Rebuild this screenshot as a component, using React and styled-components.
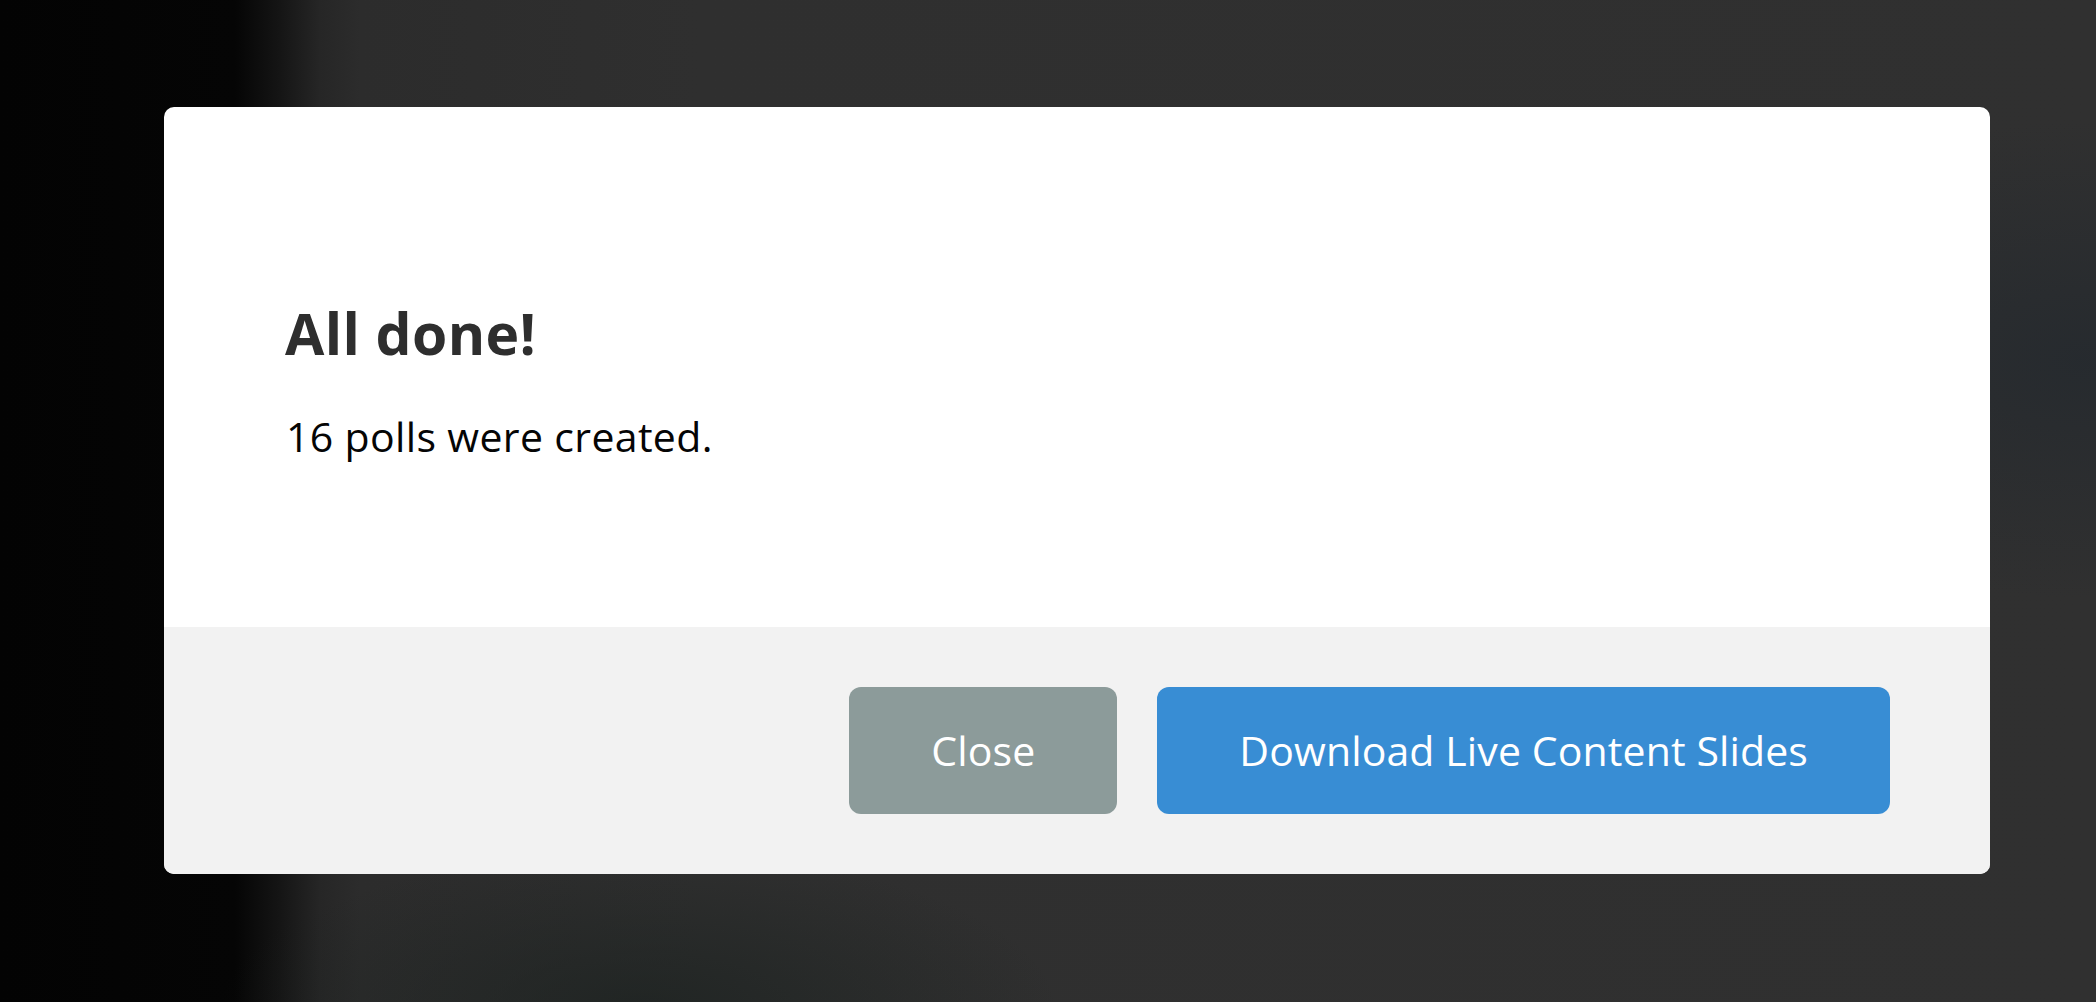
import React from "react";
import styled, { createGlobalStyle } from "styled-components";

const GlobalStyle = createGlobalStyle`
  html, body {
    margin: 0;
    padding: 0;
    width: 100%;
    height: 100%;
    overflow: hidden;
    background: #2f2f2f;
  }
  #root {
    height: 100%;
  }
  * {
    box-sizing: border-box;
  }
`;

const Backdrop = styled.div`
  width: 2096px;
  height: 1002px;
  padding: 107px 106px 0 164px;
  display: flex;
  align-items: flex-start;
  font-family: "Open Sans", "DejaVu Sans", sans-serif;
  background:
    radial-gradient(ellipse 420px 160px at 640px 1010px, rgba(28, 34, 32, 0.75), rgba(28, 34, 32, 0) 100%),
    radial-gradient(ellipse 360px 240px at 2080px 360px, rgba(34, 40, 46, 0.7), rgba(34, 40, 46, 0) 100%),
    linear-gradient(
      to right,
      #030303 0px,
      #050505 235px,
      #151515 280px,
      #262626 320px,
      #2c2c2c 360px,
      #2f2f2f 700px,
      #303030 100%
    );
`;

const Modal = styled.div`
  width: 1826px;
  border-radius: 10px;
  overflow: hidden;
  background: #ffffff;
  display: flex;
  flex-direction: column;
`;

const Body = styled.div`
  padding: 194px 121px 167px;
  display: flex;
  flex-direction: column;
`;

const Title = styled.h1`
  margin: 0;
  font-size: 57px;
  line-height: 64px;
  font-weight: 700;
  letter-spacing: 0.4px;
  color: #2e2e2e;
`;

const Message = styled.p`
  margin: 47px 0 0 1px;
  font-size: 41px;
  line-height: 48px;
  font-weight: 400;
  letter-spacing: 0.35px;
  color: #050505;
`;

const Footer = styled.div`
  background: #f2f2f2;
  padding: 60px 100px 60px 0;
  display: flex;
  justify-content: flex-end;
  gap: 40px;
`;

const Button = styled.button`
  height: 127px;
  padding: 0 82px;
  border: none;
  border-radius: 12px;
  background: ${(p) => (p.$primary ? "#388dd4" : "#8c9b9a")};
  color: #ffffff;
  font-family: "Open Sans", "DejaVu Sans", sans-serif;
  font-size: 41px;
  font-weight: 400;
  letter-spacing: 0.12px;
  line-height: 1;
  cursor: pointer;
  display: flex;
  align-items: center;
  justify-content: center;
`;

export default function App() {
  return (
    <>
      <GlobalStyle />
      <Backdrop>
        <Modal>
          <Body>
            <Title>All done!</Title>
            <Message>16 polls were created.</Message>
          </Body>
          <Footer>
            <Button>Close</Button>
            <Button $primary>Download Live Content Slides</Button>
          </Footer>
        </Modal>
      </Backdrop>
    </>
  );
}
